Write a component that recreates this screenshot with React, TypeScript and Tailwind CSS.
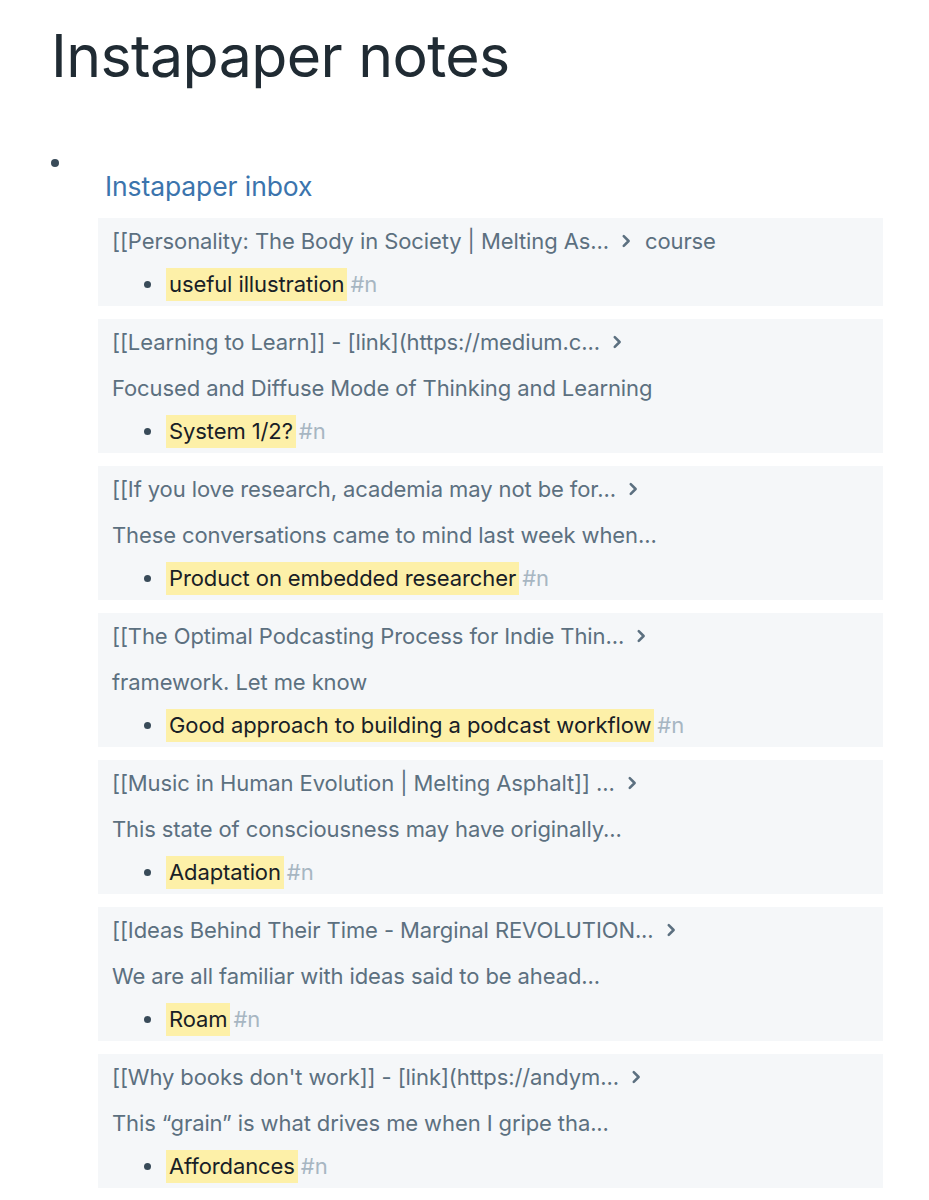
import React from 'react'

interface Note {
  title: string;
  extra?: string;
  text?: string;
  highlight: string;
}

const notes: Note[] = [
  { title: "[[Personality: The Body in Society | Melting As...", extra: "course", highlight: "useful illustration" },
  { title: "[[Learning to Learn]] - [link](https://medium.c...", text: "Focused and Diffuse Mode of Thinking and Learning", highlight: "System 1/2?" },
  { title: "[[If you love research, academia may not be for...", text: "These conversations came to mind last week when...", highlight: "Product on embedded researcher" },
  { title: "[[The Optimal Podcasting Process for Indie Thin...", text: "framework. Let me know", highlight: "Good approach to building a podcast workflow" },
  { title: "[[Music in Human Evolution | Melting Asphalt]] ...", text: "This state of consciousness may have originally...", highlight: "Adaptation" },
  { title: "[[Ideas Behind Their Time - Marginal REVOLUTION...", text: "We are all familiar with ideas said to be ahead...", highlight: "Roam" },
  { title: "[[Why books don't work]] - [link](https://andym...", text: "This \u201cgrain\u201d is what drives me when I gripe tha...", highlight: "Affordances" },
]

function Chevron() {
  return (
    <svg width="18" height="18" viewBox="0 0 24 24" fill="none" stroke="#5c7080"
      strokeWidth="3.4" strokeLinecap="round" strokeLinejoin="round">
      <path d="M9 5.5l6.5 6.5-6.5 6.5" />
    </svg>
  )
}

function NoteCard({ note }: { note: Note }) {
  return (
    <div className="bg-[#f5f7f9] pt-2 pb-[5px] pl-[14px]">
      <div className="h-[30px] flex items-center text-[#5c7080]">
        <span>{note.title}</span>
        <span className="ml-[8px] mr-[10px]"><Chevron /></span>
        {note.extra && <span>{note.extra}</span>}
      </div>
      {note.text && (
        <div className="h-[30px] mt-4 flex items-center text-[#5c7080]">{note.text}</div>
      )}
      <div className="h-[33px] mt-3 flex items-center">
        <span className="w-[7px] h-[7px] rounded-full bg-[#394b59] ml-[32px] mr-[15px]" />
        <span className="h-[33px] flex items-center px-[3px] bg-[#fdf0a8] text-[#182026]">{note.highlight}</span>
        <span className="ml-[3px] text-[#a7b6c2]">#n</span>
      </div>
    </div>
  )
}

export default function App() {
  return (
    <div className="min-h-screen w-full bg-white"
      style={{ fontFamily: "Inter, 'Noto Sans', sans-serif" }}>
      <div className="pl-[51px] pt-[21px]">
        <h1 className="text-[59px] leading-[70px] text-[#202b33] font-normal tracking-[-0.6px]">Instapaper notes</h1>
      </div>
      <div className="flex pl-[51px] pt-[68px]">
        <div className="w-[8px] h-[8px] rounded-full bg-[#394b59]" />
      </div>
      <div className="pl-[98px] pr-[46px] text-[22px] tracking-[-0.1px]">
        <div className="pl-[7px] h-[34px] mt-[3px] flex items-center text-[26.5px] text-[#3b74ad]">Instapaper inbox</div>
        <div className="flex flex-col gap-[13px] mt-[14px]">
          {notes.map((n, i) => <NoteCard key={i} note={n} />)}
        </div>
      </div>
    </div>
  )
}
